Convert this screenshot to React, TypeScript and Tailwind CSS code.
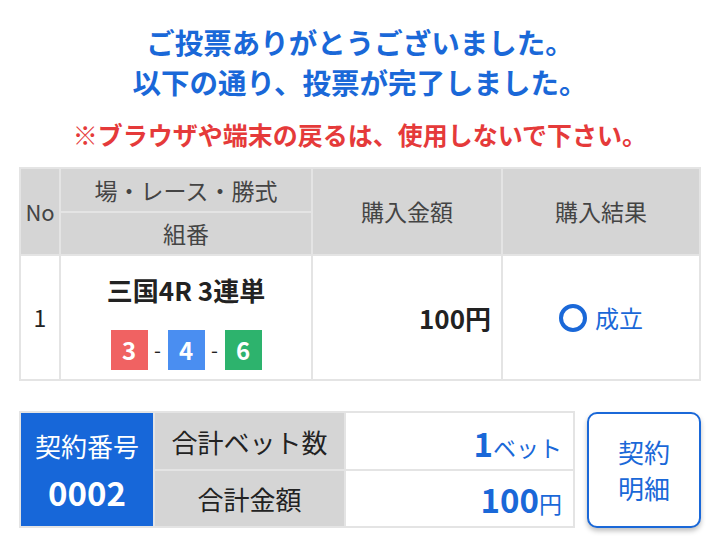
const font = { fontFamily: '"Noto Sans CJK JP", "Noto Sans", sans-serif' };

function Box({ n, color }: { n: number; color: string }) {
  return (
    <span
      className={`flex h-[40px] w-[37px] items-center justify-center text-[24px] font-bold leading-none text-white ${color}`}
    >
      {n}
    </span>
  );
}

function Dash() {
  return <span className="w-[20px] text-center text-[20px] leading-none text-[#222]">-</span>;
}

export default function App() {
  return (
    <div className="min-h-[552px] w-[720px] bg-white pt-[22px]" style={font}>
      <div className="text-center text-[28.5px] font-bold leading-[40px] text-[#1a68d8]">
        <p>ご投票ありがとうございました。</p>
        <p>以下の通り、投票が完了しました。</p>
      </div>
      <p className="mt-[14px] text-center text-[25px] font-bold leading-[36px] text-[#e53a3a]">
        ※ブラウザや端末の戻るは、使用しないで下さい。
      </p>

      <div className="ml-[19px] mt-[15px] grid w-[682px] grid-cols-[38px_250px_188px_196px] grid-rows-[42px_41px_123px] gap-[2px] bg-[#e4e4e4] p-[2px]">
        <div className="row-span-2 flex items-center justify-center bg-[#d5d5d5] text-[22px] text-[#444]">No</div>
        <div className="flex items-center justify-center bg-[#d5d5d5] text-[23px] text-[#444]">場・レース・勝式</div>
        <div className="row-span-2 flex items-center justify-center bg-[#d5d5d5] text-[23px] text-[#444]">購入金額</div>
        <div className="row-span-2 flex items-center justify-center bg-[#d5d5d5] text-[23px] text-[#444]">購入結果</div>
        <div className="flex items-center justify-center bg-[#d5d5d5] text-[23px] text-[#444]">組番</div>

        <div className="flex items-center justify-center bg-white text-[23px] text-[#222]">1</div>
        <div className="flex flex-col items-center bg-white pt-[18px]">
          <div className="text-[26px] font-bold leading-[32px] text-[#222]">三国4R 3連単</div>
          <div className="mt-[24px] flex items-center">
            <Box n={3} color="bg-[#f06262]" />
            <Dash />
            <Box n={4} color="bg-[#4a8ef1]" />
            <Dash />
            <Box n={6} color="bg-[#2db36d]" />
          </div>
        </div>
        <div className="flex items-center justify-end bg-white pr-[10px] text-[26px] font-bold text-[#222]">100円</div>
        <div className="flex items-center justify-center gap-[8px] bg-white text-[24px] text-[#1a68d8]">
          <span className="h-[28px] w-[28px] rounded-full border-[4px] border-[#1a68d8]" />
          <span>成立</span>
        </div>
      </div>

      <div className="ml-[19px] mt-[30px] flex items-start gap-[12px]">
        <div className="grid grid-cols-[132px_189px_227px] grid-rows-[56px_55px] gap-[2px] bg-[#e4e4e4] p-[2px]">
          <div className="row-span-2 flex flex-col items-center justify-center bg-[#1767d9] text-white">
            <span className="text-[26px] leading-[36px]">契約番号</span>
            <span className="mt-[8px] text-[33px] font-bold leading-[40px]">0002</span>
          </div>
          <div className="flex items-center justify-center bg-[#d5d5d5] text-[26px] text-[#222]">合計ベット数</div>
          <div className="flex items-baseline justify-end bg-white pr-[11px] pt-[6px] text-[#1a68d8]">
            <span className="text-[33px] font-bold">1</span>
            <span className="text-[23px]">ベット</span>
          </div>
          <div className="flex items-center justify-center bg-[#d5d5d5] text-[26px] text-[#222]">合計金額</div>
          <div className="flex items-baseline justify-end bg-white pr-[11px] pt-[4px] text-[#1a68d8]">
            <span className="text-[33px] font-bold">100</span>
            <span className="text-[23px]">円</span>
          </div>
        </div>
        <button className="mt-[1px] flex h-[116px] w-[114px] flex-col items-center justify-center rounded-[10px] border-2 border-[#1a68d8] bg-white text-[26px] leading-[36px] text-[#1a68d8] shadow-[0_3px_5px_rgba(0,0,0,0.25)]">
          <span>契約</span>
          <span>明細</span>
        </button>
      </div>
    </div>
  );
}
